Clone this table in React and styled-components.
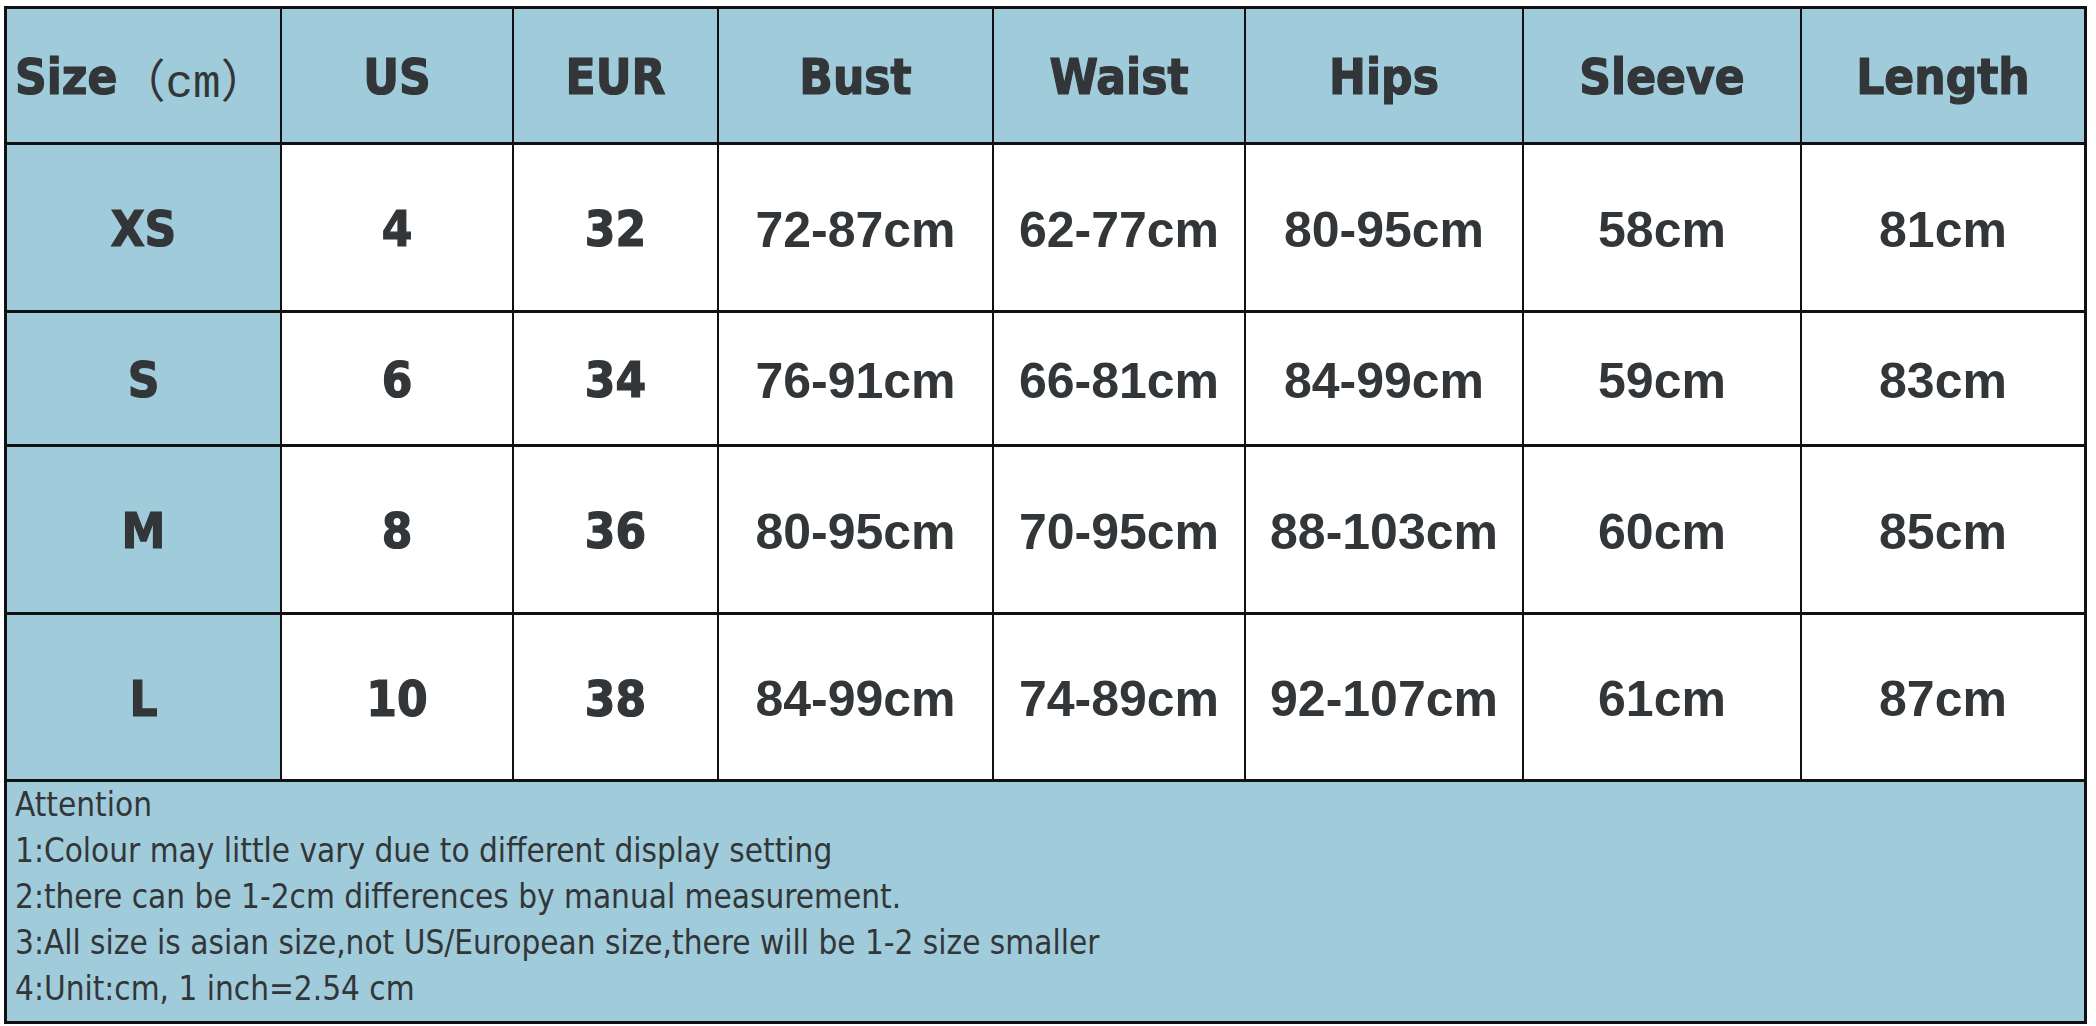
import React from 'react';
import styled, { createGlobalStyle } from 'styled-components';

const GlobalStyle = createGlobalStyle`
  html, body {
    margin: 0;
    padding: 0;
    background: #ffffff;
  }
`;

const Page = styled.div`
  width: 2096px;
  height: 1026px;
  padding: 6px 0 0 4px;
  box-sizing: border-box;
  background: #ffffff;
`;

const Chart = styled.div`
  display: grid;
  grid-template-columns: 273px 230px 203px 273px 250px 276px 276px 282px;
  grid-template-rows: 133px 165px 131px 165px 164px 239px;
  column-gap: 2px;
  row-gap: 3px;
  width: max-content;
  border: 3px solid #111;
  background: #111;
`;

const Cell = styled.div`
  display: flex;
  align-items: center;
  justify-content: ${(p) => (p.$start ? 'flex-start' : 'center')};
  padding: ${(p) => (p.$start ? '4px 0 0 8px' : '4px 0 0 0')};
  background: ${(p) => (p.$blue ? '#a0cbda' : '#ffffff')};
  color: #333638;
  white-space: nowrap;
  overflow: hidden;
  font-family: ${(p) =>
    p.$heavy
      ? '"DejaVu Sans Condensed", "DejaVu Sans", sans-serif'
      : '"Liberation Sans", Arial, sans-serif'};
  font-stretch: ${(p) => (p.$heavy ? 'condensed' : 'normal')};
  font-weight: 700;
  font-size: ${(p) => (p.$heavy ? '49px' : '50px')};
  -webkit-text-stroke: ${(p) => (p.$heavy ? '1.2px #333638' : '0')};
`;

const Unit = styled.span`
  font-family: "Liberation Mono", "Noto Sans CJK SC", monospace;
  font-weight: 400;
  font-size: 46px;
  margin-left: 2px;
  -webkit-text-stroke: 0;
`;

const Paren = styled.span`
  font-family: "Noto Sans CJK SC", sans-serif;
  font-weight: 400;
`;

const Notes = styled.div`
  grid-column: 1 / -1;
  background: #a0cbda;
  color: #333638;
  padding: 0 0 0 8px;
  font-family: "DejaVu Sans Condensed", "DejaVu Sans", sans-serif;
  font-stretch: condensed;
  font-size: 33px;
  line-height: 46px;
`;

const NoteLine = styled.div`
  white-space: nowrap;
`;

const headers = ['US', 'EUR', 'Bust', 'Waist', 'Hips', 'Sleeve', 'Length'];

const rows = [
  ['XS', '4', '32', '72-87cm', '62-77cm', '80-95cm', '58cm', '81cm'],
  ['S', '6', '34', '76-91cm', '66-81cm', '84-99cm', '59cm', '83cm'],
  ['M', '8', '36', '80-95cm', '70-95cm', '88-103cm', '60cm', '85cm'],
  ['L', '10', '38', '84-99cm', '74-89cm', '92-107cm', '61cm', '87cm'],
];

const notes = [
  'Attention',
  '1:Colour may little vary due to different display setting',
  '2:there can be 1-2cm differences by manual measurement.',
  '3:All size is asian size,not US/European size,there will be 1-2 size smaller',
  '4:Unit:cm, 1 inch=2.54 cm',
];

export default function App() {
  return (
    <>
      <GlobalStyle />
      <Page>
        <Chart>
          <Cell $blue $heavy $start>
            Size
            <Unit>
              <Paren>（</Paren>cm<Paren>）</Paren>
            </Unit>
          </Cell>
          {headers.map((h) => (
            <Cell key={h} $blue $heavy>
              {h}
            </Cell>
          ))}

          {rows.map((row) =>
            row.map((value, i) => (
              <Cell key={row[0] + i} $blue={i === 0} $heavy={i < 3}>
                {value}
              </Cell>
            ))
          )}

          <Notes>
            {notes.map((line) => (
              <NoteLine key={line}>{line}</NoteLine>
            ))}
          </Notes>
        </Chart>
      </Page>
    </>
  );
}
